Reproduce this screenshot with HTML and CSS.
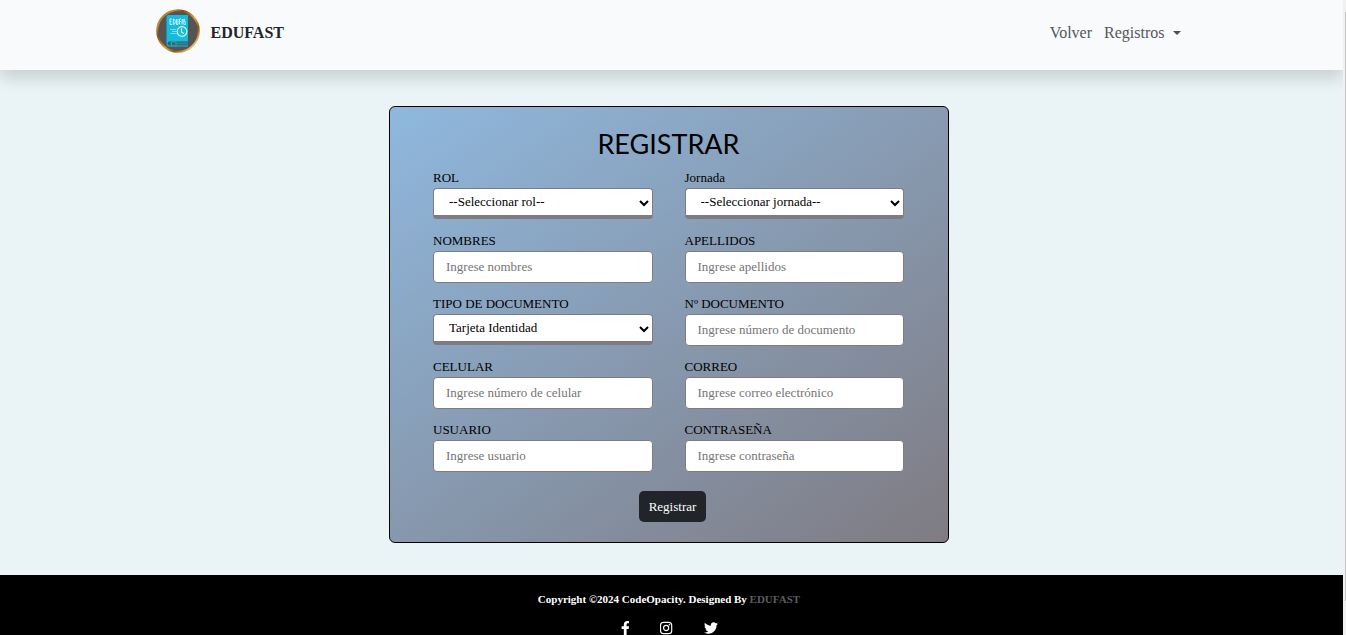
FILE: index.html
```html
<!DOCTYPE html>
<html lang="es">
<head>
<meta charset="utf-8">
<meta name="viewport" content="width=device-width, initial-scale=1">
<title>EDUFAST - Registrar</title>
<link rel="stylesheet" href="styles.css">
</head>
<body class="shell">
<div class="page">
  <header class="topbar">
    <div class="topbar-inner">
      <a class="brand" href="#">
        <svg class="brand-logo" viewBox="0 0 44 44" aria-hidden="true">
          <defs>
            <linearGradient id="gold" x1="0" y1="0" x2="1" y2="1">
              <stop offset="0" stop-color="#a8660f"/>
              <stop offset=".2" stop-color="#c58a3a"/>
              <stop offset=".32" stop-color="#8c4f0c"/>
              <stop offset=".55" stop-color="#d9a441"/>
              <stop offset=".7" stop-color="#94560f"/>
              <stop offset=".88" stop-color="#edc878"/>
              <stop offset="1" stop-color="#9a5a10"/>
            </linearGradient>
          </defs>
          <circle cx="22" cy="22" r="20.800" fill="#545454" stroke="url(#gold)" stroke-width="2"/>
          <path d="M12.500 6H32v26.500H13.500a2 2 0 0 0 0 4H32v1H13a3 3 0 0 1-2.500-3V8a2 2 0 0 1 2-2z" fill="#12bcdc"/>
          <path d="M14 33.500h18v2H14z" fill="#23899c"/>
          <path d="M15.500 33v4.500l2.200-1.400 2.200 1.400V33z" fill="#545454" stroke="#12bcdc" stroke-width=".8"/>
          <path d="M14 10v5.500M14 10h2M14 12.700h1.500M14 15.500h2M17.300 10v5.500q2 0 2-2.700t-2-2.800M20.500 10v5.500H22V10M23.500 15.500V10H25M23.500 12.500H25M26 15.500v-5h1.200v5M29.200 10.300h-1v2.200h1v3h-1" fill="none" stroke="#d8f6fb" stroke-width=".9"/>
          <circle cx="26" cy="22.500" r="4.800" fill="none" stroke="#d8f6fb" stroke-width="1.300"/>
          <path d="M25.500 19.500v3.500l2.200 1.500" fill="none" stroke="#fff" stroke-width="1.100"/>
          <path d="M14 20.500h6M16 22.500h4M14.500 24.500h6" stroke="#9fe5f1" stroke-width=".7"/>
        </svg>
        <span class="brand-name">EDUFAST</span>
      </a>
      <nav class="nav">
        <a class="nav-link" href="#">Volver</a>
        <a class="nav-link nav-drop" href="#">Registros</a>
      </nav>
    </div>
  </header>

  <main class="main">
    <form class="card">
      <h1 class="title">REGISTRAR</h1>
      <div class="fields">
        <div class="field">
          <label for="rol">ROL</label>
          <select class="control select" id="rol"><option>--Seleccionar rol--</option></select>
        </div>
        <div class="field">
          <label for="jornada">Jornada</label>
          <select class="control select" id="jornada"><option>--Seleccionar jornada--</option></select>
        </div>
        <div class="field">
          <label for="nombres">NOMBRES</label>
          <input class="control" id="nombres" type="text" placeholder="Ingrese nombres">
        </div>
        <div class="field">
          <label for="apellidos">APELLIDOS</label>
          <input class="control" id="apellidos" type="text" placeholder="Ingrese apellidos">
        </div>
        <div class="field">
          <label for="tipo">TIPO DE DOCUMENTO</label>
          <select class="control select" id="tipo"><option>Tarjeta Identidad</option></select>
        </div>
        <div class="field">
          <label for="documento">Nº DOCUMENTO</label>
          <input class="control" id="documento" type="text" placeholder="Ingrese número de documento">
        </div>
        <div class="field">
          <label for="celular">CELULAR</label>
          <input class="control" id="celular" type="text" placeholder="Ingrese número de celular">
        </div>
        <div class="field">
          <label for="correo">CORREO</label>
          <input class="control" id="correo" type="email" placeholder="Ingrese correo electrónico">
        </div>
        <div class="field">
          <label for="usuario">USUARIO</label>
          <input class="control" id="usuario" type="text" placeholder="Ingrese usuario">
        </div>
        <div class="field">
          <label for="clave">CONTRASEÑA</label>
          <input class="control" id="clave" type="password" placeholder="Ingrese contraseña">
        </div>
      </div>
      <div class="actions"><button class="submit" type="submit">Registrar</button></div>
    </form>
  </main>

  <footer class="footer">
    <p class="copy">Copyright ©2024 CodeOpacity. Designed By <span class="by">EDUFAST</span></p>
    <div class="social">
      <a class="social-link" href="#" aria-label="Facebook"><svg height="14" viewBox="0 0 320 512"><path fill="#fff" d="M279 288l14-93h-89v-60c0-25 12-50 52-50h41V7s-37-7-72-7c-73 0-121 44-121 125v70H23v93h81v224h100V288z"/></svg></a>
      <a class="social-link" href="#" aria-label="Instagram"><svg height="14" viewBox="0 0 448 512"><rect x="20" y="52" width="408" height="408" rx="108" fill="none" stroke="#fff" stroke-width="42"/><circle cx="224" cy="256" r="94" fill="none" stroke="#fff" stroke-width="42"/><circle cx="343" cy="137" r="27" fill="#fff"/></svg></a>
      <a class="social-link" href="#" aria-label="Twitter"><svg height="14" viewBox="0 0 512 512"><path fill="#fff" d="M459 152c.3 4 .3 9 .3 13.600C459.300 304 354 464 161 464c-59 0-114-17-161-47 8 1 16 1.300 25 1.300 49 0 94-16.600 130-45-46-1-85-31-98-73 6 1 13 1.600 20 1.600 9 0 18-1.300 27-3.600-48-10-84-52-84-103v-1.300c14 8 30 13 47 13.600C39 189 20 157 20 120c0-20 5-37 14-53 52 64 130 106 217 110-1.600-8-2.600-16-2.600-24 0-58 47-105 105-105 30 0 57 13 77 33 24-5 46-13 66-25-8 24-24 45-46 58 21-2 42-8 60-16-14 21-32 39-52 54z"/></svg></a>
    </div>
  </footer>
</div>
<div class="scroll-track" aria-hidden="true"><div class="scroll-thumb"></div></div>
</body>
</html>
```
FILE: styles.css
```css
* { box-sizing: border-box; }

.shell {
  margin: 0;
  display: grid;
  grid-template-columns: minmax(0, 1fr) 3px;
  height: 100vh;
  overflow: hidden;
  background: #eaf3f5;
  color: #000;
  font-family: "Liberation Serif", "Times New Roman", serif;
  font-size: 13px;
}

.page { overflow: hidden; }

.topbar {
  padding: 8px 16px 16px;
  background: #f8fafc;
  box-shadow: 0 8px 16px rgba(0, 0, 0, .15);
}

.topbar-inner {
  display: flex;
  align-items: center;
  justify-content: space-between;
  max-width: 1032px;
  margin: 0 auto;
}

.brand {
  display: flex;
  align-items: center;
  gap: 11px;
  color: #212529;
  font-size: 16px;
  font-weight: bold;
  text-decoration: none;
}

.brand-logo { width: 44px; height: 46px; }

.brand-name { padding-top: 4px; }

.nav { display: flex; gap: 12px; padding: 4px 7px 0 0; }

.nav-link {
  color: #555759;
  font-size: 16px;
  text-decoration: none;
}

.nav-drop { display: flex; align-items: center; gap: 8px; }

.nav-drop::after {
  content: "";
  border: 4px solid transparent;
  border-top-color: #4d4f51;
  border-bottom: 0;
}

.main { padding: 36px 21px 32px 16px; }

.card {
  max-width: 560px;
  margin: 0 auto;
  padding: 20px 44px 20px 43px;
  border: 1px solid #000;
  border-radius: 6px;
  background: linear-gradient(145deg, #8fb8de, #7f7b82);
}

.title {
  margin: 0 0 9px;
  font-family: Lato, sans-serif;
  font-size: 27px;
  font-weight: 400;
  line-height: 34px;
  text-align: center;
}

.fields {
  display: grid;
  grid-template-columns: repeat(2, minmax(0, 1fr));
  gap: 13px 32px;
}

.field {
  display: flex;
  flex-direction: column;
  gap: 2px;
  min-height: 50px;
}

.field label { line-height: 16px; }

.control {
  width: 100%;
  height: 32px;
  padding: 4px 12px;
  border: 1px solid #7f7b82;
  border-radius: 4px;
  background: #fff;
  color: #000;
  font: inherit;
}

.control::placeholder { color: #757575; }

.select {
  height: 31px;
  padding: 2px 11px 4px;
  border-bottom-width: 4px;
}

.actions { display: flex; justify-content: center; padding: 19px 0 0 8px; }

.submit {
  height: 31px;
  padding: 0 10px;
  border: 0;
  border-radius: 5px;
  background: #212529;
  color: #fff;
  font: inherit;
}

.footer {
  padding: 16px 5px 0 0;
  background: #000;
  color: #fff;
  text-align: center;
}

.copy { margin: 0; font-size: 11px; font-weight: bold; line-height: 16px; }

.by { color: #5c5c5c; }

.social { display: flex; justify-content: center; gap: 31px; padding-top: 14px; }

.social-link { display: flex; }

.scroll-track { padding: 12px 0 34px 2px; background: #f1f1f1; }

.scroll-thumb { height: 100%; background: #c1c1c1; }
```
